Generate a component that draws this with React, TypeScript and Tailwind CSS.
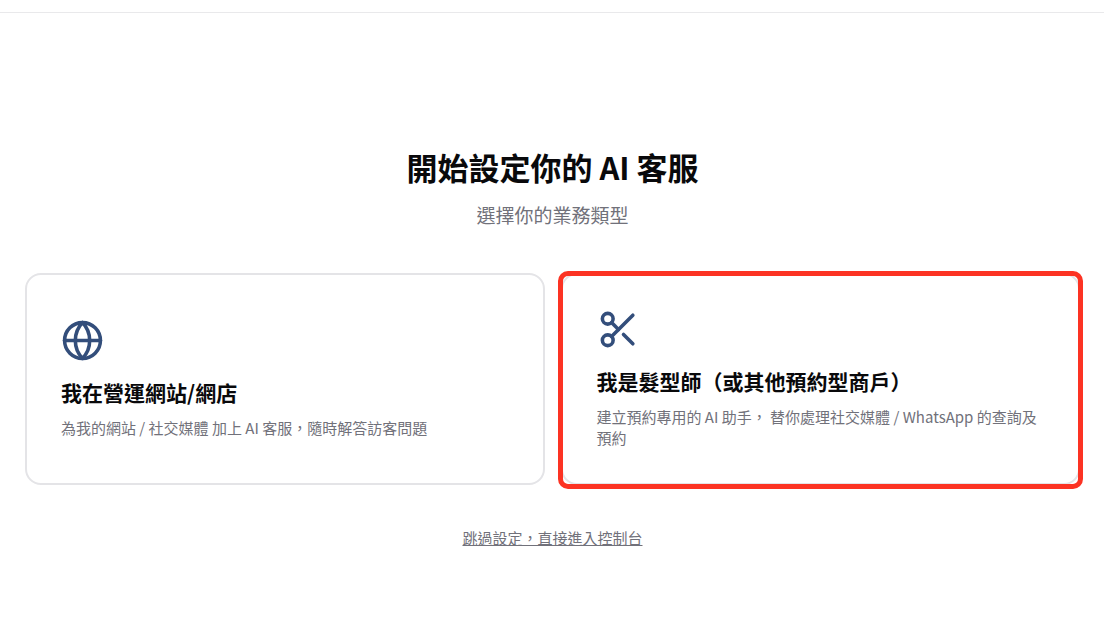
import { Globe, Scissors } from "lucide-react";
import type { LucideIcon } from "lucide-react";

interface BusinessType {
  id: string;
  icon: LucideIcon;
  title: string;
  description: string;
  highlighted?: boolean;
}

const businessTypes: BusinessType[] = [
  {
    id: "website",
    icon: Globe,
    title: "我在營運網站/網店",
    description: "為我的網站 / 社交媒體 加上 AI 客服，隨時解答訪客問題",
  },
  {
    id: "booking",
    icon: Scissors,
    title: "我是髮型師（或其他預約型商戶）",
    description: "建立預約專用的 AI 助手， 替你處理社交媒體 / WhatsApp 的查詢及預約",
    highlighted: true,
  },
];

function BusinessCard({ type }: { type: BusinessType }) {
  const Icon = type.icon;

  return (
    <div className="relative flex">
      <button
        type="button"
        className="flex w-full cursor-pointer flex-col items-start justify-center rounded-2xl border-2 border-[#e4e4e7] px-[34px] pt-[33px] pb-[35px] text-left"
      >
        <Icon className="size-[43px] text-[#334e7b]" strokeWidth={2} />
        <span className="mt-4 text-[21px] leading-7 font-bold text-[#09090b]">{type.title}</span>
        <span className="mt-[11px] text-[15px] leading-[21px] text-[#71717a]">{type.description}</span>
      </button>
      {type.highlighted && (
        <div className="pointer-events-none absolute -inset-x-[3px] -top-[2px] -bottom-[4px] rounded-[10px] border-[5px] border-[#fc3323]" />
      )}
    </div>
  );
}

function App() {
  return (
    <div lang="zh-Hant" className="min-h-screen bg-white font-['Noto_Sans_CJK_TC',sans-serif]">
      <header className="h-[13px] border-b border-[#e9e9eb]" />

      <main className="pt-[132px] pr-6 pb-20 pl-[25px]">
        <div className="text-center">
          <h1 className="text-[31px] leading-[44px] font-bold text-[#09090b]">開始設定你的 AI 客服</h1>
          <p className="mt-3 text-[19px] leading-7 text-[#71717a]">選擇你的業務類型</p>
        </div>

        <div className="mt-11 grid grid-cols-2 gap-4">
          {businessTypes.map((type) => (
            <BusinessCard key={type.id} type={type} />
          ))}
        </div>

        <div className="mt-10 text-center">
          <a href="#console" className="text-[15px] leading-6 text-[#71717a] underline">
            跳過設定，直接進入控制台
          </a>
        </div>
      </main>
    </div>
  );
}

export default App;
